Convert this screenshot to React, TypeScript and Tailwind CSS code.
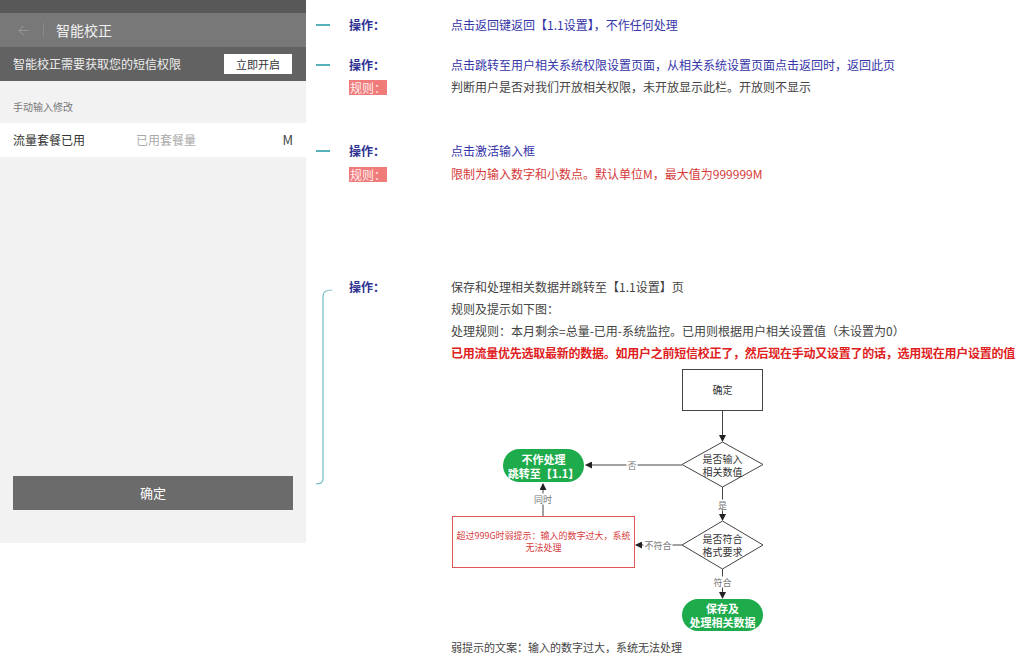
import { ArrowLeft } from "lucide-react";

function Dash() {
  return <div className="w-[14px] h-[22px] flex items-center"><div className="w-[14px] h-[1.5px] bg-[#55b2b8]" /></div>;
}

function OpLabel() {
  return <div className="ml-[19px] w-[102px] h-[22px] leading-[22px] text-[#2e3192] font-bold">操作：</div>;
}

function RuleLabel() {
  return (
    <div className="ml-[33px] w-[102px] h-[22px] flex items-center">
      <span className="bg-[#f07b7b] text-[#fff0f0] px-[1px] leading-[15px]">规则：</span>
    </div>
  );
}

function PhonePanel() {
  return (
    <div className="w-[306px] h-[543px] bg-[#f2f2f2] flex flex-col shrink-0">
      <div className="h-[13px] bg-[#585858]" />
      <div className="h-[34px] bg-[#787878] flex items-center">
        <ArrowLeft size={15} strokeWidth={1.5} className="ml-[16px] text-[#9a9a9a]" />
        <div className="ml-[12px] w-px h-[14px] bg-[#8a8a8a]" />
        <div className="ml-[12px] text-[14px] text-[#f2f2f2]">智能校正</div>
      </div>
      <div className="h-[34px] bg-[#626262] flex items-center justify-between pl-[13px] pr-[14px]">
        <div className="text-[12px] text-[#eeeeee]">智能校正需要获取您的短信权限</div>
        <div className="w-[68px] h-[20px] bg-white text-[11px] text-[#333] flex items-center justify-center">立即开启</div>
      </div>
      <div className="h-[42px] flex items-end pb-[9px] px-[13px] text-[10px] text-[#777]">手动输入修改</div>
      <div className="h-[34px] bg-white flex items-center px-[13px] text-[12px]">
        <div className="w-[123px] text-[#333]">流量套餐已用</div>
        <div className="flex-1 text-[#aaa]">已用套餐量</div>
        <div className="text-[#444] text-[13px]">M</div>
      </div>
      <div className="flex-1" />
      <div className="mx-[13px] mb-[33px] h-[34px] bg-[#6b6b6b] flex items-center justify-center text-[13px] text-white">确定</div>
    </div>
  );
}

function Tag({ x, y, children }: { x: number; y: number; children: string }) {
  return (
    <div
      className="absolute -translate-x-1/2 -translate-y-1/2 bg-white px-[1px] text-[9px] leading-[11px] text-[#777] whitespace-nowrap"
      style={{ left: x, top: y }}
    >
      {children}
    </div>
  );
}

function Flowchart() {
  return (
    <div className="relative w-[320px] h-[271px]">
      <svg className="absolute inset-0" width="320" height="271">
        <defs>
          <marker id="ah" markerWidth="7" markerHeight="7" refX="6" refY="3.5" orient="auto">
            <path d="M0,0 L7,3.5 L0,7 z" fill="#222" />
          </marker>
        </defs>
        <line x1="271.5" y1="46" x2="271.5" y2="76" stroke="#444" markerEnd="url(#ah)" />
        <polygon points="231,99.5 271.5,77 312,99.5 271.5,122" fill="white" stroke="#444" />
        <line x1="231" y1="100" x2="135" y2="100" stroke="#444" markerEnd="url(#ah)" />
        <line x1="92" y1="151" x2="92" y2="119" stroke="#444" markerEnd="url(#ah)" />
        <line x1="271.5" y1="122" x2="271.5" y2="155" stroke="#444" markerEnd="url(#ah)" />
        <polygon points="231,180 271.5,156 312,180 271.5,204" fill="white" stroke="#444" />
        <line x1="231" y1="180" x2="185" y2="180" stroke="#444" markerEnd="url(#ah)" />
        <line x1="271.5" y1="204" x2="271.5" y2="233" stroke="#444" markerEnd="url(#ah)" />
      </svg>
      <div className="absolute left-[231px] top-[4px] w-[81px] h-[42px] border border-[#444] bg-white flex items-center justify-center text-[10px] text-[#333]">确定</div>
      <div className="absolute left-[231px] top-[77px] w-[81px] h-[45px] flex items-center justify-center text-center text-[10px] leading-[13px] text-[#333]">是否输入<br />相关数值</div>
      <div className="absolute left-[231px] top-[156px] w-[81px] h-[48px] flex items-center justify-center text-center text-[10px] leading-[13px] text-[#333]">是否符合<br />格式要求</div>
      <div className="absolute left-[52px] top-[84px] w-[81px] h-[33px] rounded-full bg-[#1eab4b] flex items-center justify-center text-center text-[11px] leading-[14px] font-bold text-white">不作处理<br />跳转至【1.1】</div>
      <div className="absolute left-[231px] top-[234px] w-[81px] h-[32px] rounded-full bg-[#1eab4b] flex items-center justify-center text-center text-[11px] leading-[14px] font-bold text-white">保存及<br />处理相关数据</div>
      <div className="absolute left-[1px] top-[151px] w-[183px] h-[52px] border border-[#e05555] bg-white flex items-center justify-center text-center text-[9px] leading-[12px] text-[#d83c3c]">超过999G时弱提示：输入的数字过大，系统<br />无法处理</div>
      <Tag x={181} y={100}>否</Tag>
      <Tag x={92} y={134}>同时</Tag>
      <Tag x={271.5} y={140}>是</Tag>
      <Tag x={207} y={180}>不符合</Tag>
      <Tag x={271.5} y={217}>符合</Tag>
    </div>
  );
}

export default function App() {
  return (
    <div className="w-[1024px] h-[655px] bg-white flex overflow-hidden font-['Microsoft_YaHei','Noto_Sans_CJK_SC',sans-serif] text-[12px]">
      <PhonePanel />
      <div className="flex-1 flex flex-col pl-[10px] pt-[14px] leading-[22px] whitespace-nowrap">
        <div className="flex">
          <Dash />
          <OpLabel />
          <div className="text-[#3535a8]">点击返回键返回【1.1设置】，不作任何处理</div>
        </div>

        <div className="mt-[18px] flex">
          <Dash />
          <OpLabel />
          <div className="text-[#3535a8]">点击跳转至用户相关系统权限设置页面，从相关系统设置页面点击返回时，返回此页</div>
        </div>
        <div className="flex">
          <RuleLabel />
          <div className="text-[#444]">判断用户是否对我们开放相关权限，未开放显示此栏。开放则不显示</div>
        </div>

        <div className="mt-[42px] flex">
          <Dash />
          <OpLabel />
          <div className="text-[#3535a8]">点击激活输入框</div>
        </div>
        <div className="flex mt-[1px]">
          <RuleLabel />
          <div className="text-[#d63a3a]">限制为输入数字和小数点。默认单位M，最大值为999999M</div>
        </div>

        <div className="mt-[91px] flex">
          <div className="w-[14px]">
            <svg className="mt-[13px] overflow-visible" width="14" height="196">
              <path d="M16 1 Q7 1 7 7 L7 190 Q7 195 0 195" fill="none" stroke="#6dbcc0" strokeWidth="1.2" />
            </svg>
          </div>
          <OpLabel />
          <div className="flex flex-col text-[#444]">
            <div>保存和处理相关数据并跳转至【1.1设置】页</div>
            <div>规则及提示如下图：</div>
            <div>处理规则：本月剩余=总量-已用-系统监控。已用则根据用户相关设置值（未设置为0）</div>
            <div className="font-bold text-[#e02020] tracking-[-0.25px]">已用流量优先选取最新的数据。如用户之前短信校正了，然后现在手动又设置了的话，选用现在用户设置的值</div>
            <div className="mt-px">
              <Flowchart />
            </div>
            <div className="text-[11px]">弱提示的文案：输入的数字过大，系统无法处理</div>
          </div>
        </div>
      </div>
    </div>
  );
}
